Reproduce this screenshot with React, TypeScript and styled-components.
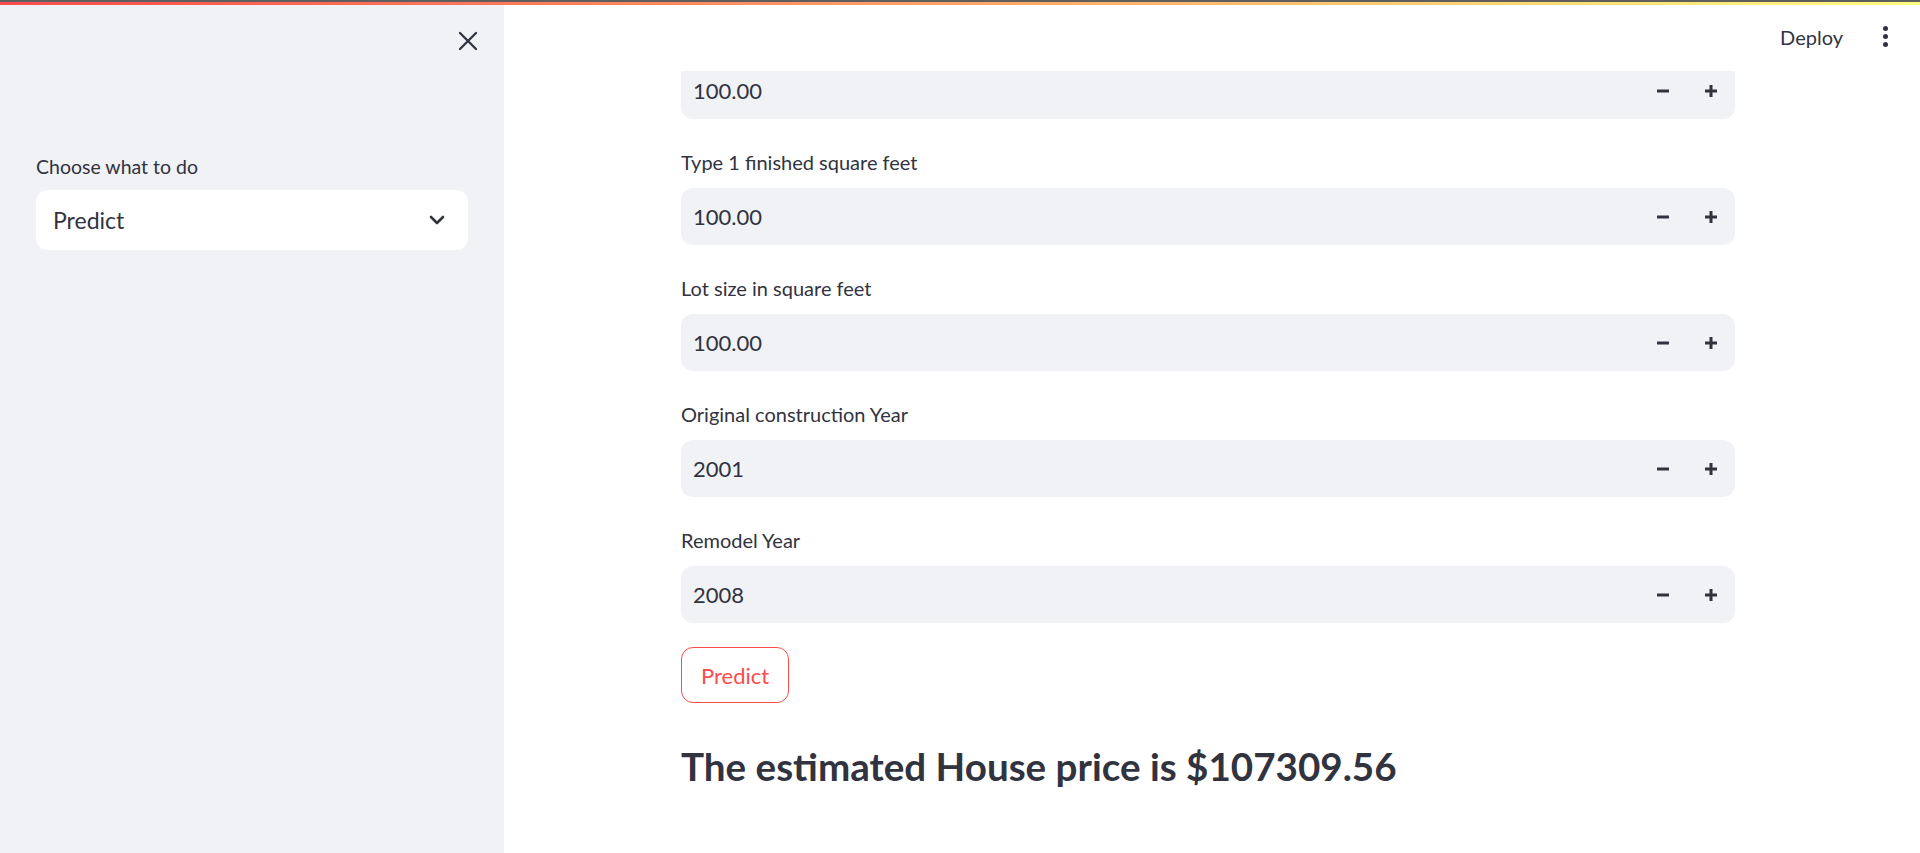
import React from "react";
import styled, { createGlobalStyle } from "styled-components";

const GlobalStyle = createGlobalStyle`
  html, body { margin: 0; padding: 0; height: 100%; overflow: hidden; }
  body { font-family: Lato, "Source Sans Pro", "Noto Sans", sans-serif; color: #31333f; background: #ffffff; }
  #root { height: 100%; }
  * { box-sizing: border-box; }
`;

const Page = styled.div`
  width: 1920px;
  height: 853px;
  display: flex;
  flex-direction: column;
  overflow: hidden;
`;

const Frame = styled.div`
  height: 2px;
  background: #5e5e5e;
  flex: none;
`;

const Decoration = styled.div`
  height: 3px;
  flex: none;
  background: linear-gradient(90deg, #ff4b4b, #fffd80);
`;

const Body = styled.div`
  flex: 1;
  display: flex;
  min-height: 0;
`;

const Sidebar = styled.aside`
  width: 504px;
  flex: none;
  background: #f0f2f6;
  padding: 0 36px;
  display: flex;
  flex-direction: column;
`;

const SidebarTop = styled.div`
  height: 74px;
  display: flex;
  justify-content: flex-end;
  align-items: center;
`;

const CloseButton = styled.button`
  width: 24px;
  height: 24px;
  border: none;
  background: transparent;
  padding: 0;
  margin-right: -12px;
  margin-top: -2px;
  display: flex;
  align-items: center;
  justify-content: center;
  color: #31333f;
  cursor: pointer;
`;

const SidebarBody = styled.div`
  padding-top: 68px;
  display: flex;
  flex-direction: column;
`;

const Label = styled.label<{ $compact?: boolean }>`
  display: block;
  height: 39px;
  line-height: 39px;
  font-size: ${(p) => (p.$compact ? "19.5px" : "20px")};
  color: #31333f;
  margin-bottom: ${(p) => (p.$compact ? "4px" : "6px")};
`;

const SelectBox = styled.div`
  height: 60px;
  background: #ffffff;
  border-radius: 12px;
  display: flex;
  align-items: center;
  justify-content: space-between;
  padding: 0 22px 0 17px;
  font-size: 23px;
  color: #31333f;
`;

const Main = styled.main`
  flex: 1;
  display: flex;
  flex-direction: column;
  min-width: 0;
  padding-right: 8px;
`;

const Header = styled.header`
  height: 66px;
  flex: none;
  display: flex;
  justify-content: flex-end;
  align-items: center;
  gap: 40px;
  padding-right: 24px;
  padding-bottom: 3px;
  background: #ffffff;
  position: relative;
  z-index: 2;
`;

const DeployButton = styled.button`
  border: none;
  background: transparent;
  font-family: inherit;
  font-size: 20px;
  color: #31333f;
  padding: 0;
  cursor: pointer;
`;

const MenuDots = styled.div`
  display: flex;
  flex-direction: column;
  gap: 3px;
  align-items: center;
`;

const Dot = styled.span`
  width: 5px;
  height: 5px;
  border-radius: 50%;
  background: #31333f;
`;

const Scroller = styled.div`
  flex: 1;
  overflow: hidden;
  display: flex;
  justify-content: center;
`;

const Content = styled.div`
  width: 1054px;
  display: flex;
  flex-direction: column;
  gap: 24px;
  margin-top: -9px;
`;

const Field = styled.div`
  display: flex;
  flex-direction: column;
`;

const NumberBox = styled.div`
  height: 57px;
  background: #f0f2f6;
  border-radius: 12px;
  display: flex;
  align-items: center;
  padding-left: 12px;
  font-size: 22px;
  color: #31333f;
`;

const Value = styled.span`
  flex: 1;
`;

const StepButton = styled.button`
  width: 48px;
  height: 100%;
  border: none;
  background: transparent;
  display: flex;
  align-items: center;
  justify-content: center;
  padding: 0;
  color: #31333f;
  cursor: pointer;
`;

const Steppers = styled.div`
  display: flex;
  height: 100%;
`;

const PrimaryOutline = styled.button`
  align-self: flex-start;
  height: 56px;
  padding: 0 19px;
  border: 1.5px solid #ff4b4b;
  border-radius: 12px;
  background: #ffffff;
  color: #ff4b4b;
  font-family: inherit;
  font-size: 22px;
  cursor: pointer;
`;

const Result = styled.h3`
  margin: 0;
  padding-top: 14px;
  font-size: 38.6px;
  line-height: 50px;
  font-weight: 700;
  color: #31333f;
`;

const Minus = () => (
  <svg width="12" height="12" viewBox="0 0 12 12">
    <rect x="0" y="4.5" width="12" height="3" fill="currentColor" />
  </svg>
);

const Plus = () => (
  <svg width="12" height="12" viewBox="0 0 12 12">
    <rect x="0" y="4.5" width="12" height="3" fill="currentColor" />
    <rect x="4.5" y="0" width="3" height="12" fill="currentColor" />
  </svg>
);

const fields = [
  { label: "", value: "100.00" },
  { label: "Type 1 finished square feet", value: "100.00" },
  { label: "Lot size in square feet", value: "100.00" },
  { label: "Original construction Year", value: "2001" },
  { label: "Remodel Year", value: "2008" },
];

export default function App() {
  return (
    <Page>
      <GlobalStyle />
      <Frame />
      <Decoration />
      <Body>
        <Sidebar>
          <SidebarTop>
            <CloseButton aria-label="Close sidebar">
              <svg width="20" height="20" viewBox="0 0 20 20">
                <path d="M2 2 L18 18 M18 2 L2 18" stroke="currentColor" strokeWidth="2.3" strokeLinecap="round" />
              </svg>
            </CloseButton>
          </SidebarTop>
          <SidebarBody>
            <Label $compact>Choose what to do</Label>
            <SelectBox>
              <span>Predict</span>
              <svg width="18" height="12" viewBox="0 0 18 12">
                <path d="M3 3 L9 9 L15 3" stroke="currentColor" strokeWidth="2.6" fill="none" strokeLinecap="round" strokeLinejoin="round" />
              </svg>
            </SelectBox>
          </SidebarBody>
        </Sidebar>
        <Main>
          <Header>
            <DeployButton>Deploy</DeployButton>
            <MenuDots>
              <Dot />
              <Dot />
              <Dot />
            </MenuDots>
          </Header>
          <Scroller>
            <Content>
              {fields.map((f, i) => (
                <Field key={i}>
                  {f.label && <Label>{f.label}</Label>}
                  <NumberBox>
                    <Value>{f.value}</Value>
                    <Steppers>
                      <StepButton aria-label="decrement"><Minus /></StepButton>
                      <StepButton aria-label="increment"><Plus /></StepButton>
                    </Steppers>
                  </NumberBox>
                </Field>
              ))}
              <PrimaryOutline>Predict</PrimaryOutline>
              <Result>The estimated House price is $107309.56</Result>
            </Content>
          </Scroller>
        </Main>
      </Body>
    </Page>
  );
}
